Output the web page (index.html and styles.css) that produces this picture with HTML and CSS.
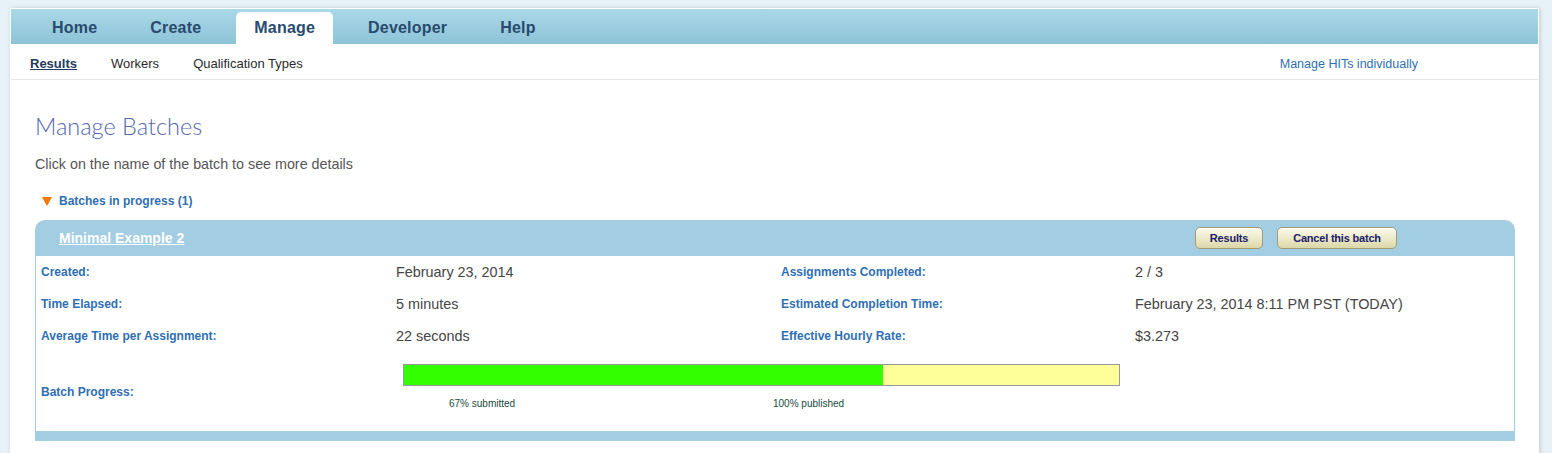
FILE: index.html
```html
<!DOCTYPE html>
<html>
<head>
<meta charset="utf-8">
<title>Manage Batches</title>
<link rel="stylesheet" href="styles.css">
</head>
<body>
<div class="page">
  <div class="tabbar">
    <a class="tab">Home</a>
    <a class="tab">Create</a>
    <a class="tab active">Manage</a>
    <a class="tab">Developer</a>
    <a class="tab">Help</a>
  </div>
  <div class="subnav">
    <div class="subnav-left">
      <a class="sub current">Results</a>
      <a class="sub">Workers</a>
      <a class="sub">Qualification Types</a>
    </div>
    <a class="sub-right">Manage HITs individually</a>
  </div>
  <div class="content">
    <h1 class="title">Manage Batches</h1>
    <p class="intro">Click on the name of the batch to see more details</p>
    <div class="section-toggle">
      <svg class="tri" width="10" height="9" viewBox="0 0 10 9"><polygon points="0,0 10,0 5,9" fill="#f07800"/></svg>
      <span>Batches in progress (1)</span>
    </div>
    <div class="batch">
      <div class="batch-head">
        <a class="batch-name">Minimal Example 2</a>
        <div class="btns">
          <button class="btn btn-results">Results</button>
          <button class="btn btn-cancel">Cancel this batch</button>
        </div>
      </div>
      <div class="batch-body">
        <div class="lbl">Created:</div>
        <div class="val">February 23, 2014</div>
        <div class="lbl">Assignments Completed:</div>
        <div class="val">2 / 3</div>

        <div class="lbl">Time Elapsed:</div>
        <div class="val">5 minutes</div>
        <div class="lbl">Estimated Completion Time:</div>
        <div class="val">February 23, 2014 8:11 PM PST (TODAY)</div>

        <div class="lbl">Average Time per Assignment:</div>
        <div class="val">22 seconds</div>
        <div class="lbl">Effective Hourly Rate:</div>
        <div class="val">$3.273</div>

        <div class="lbl">Batch Progress:</div>
        <div class="prog-cell">
          <div class="bar"><div class="fill" style="width:67%"></div></div>
          <div class="bar-labels">
            <span>67% submitted</span>
            <span>100% published</span>
          </div>
        </div>
      </div>
      <div class="batch-foot"></div>
    </div>
  </div>
</div>
</body>
</html>
```
FILE: styles.css
```css
html, body {
  margin: 0;
  padding: 0;
}
body {
  background: #e7f2f8;
  font-family: "Liberation Sans", Arial, Helvetica, sans-serif;
}
.page {
  margin: 8px 0 0 10px;
  width: 1527px;
  min-height: 480px;
  padding: 1px;
  background: #ffffff;
  box-shadow: 1px 0 4px rgba(0, 0, 0, 0.18);
}
.tabbar {
  height: 35px;
  display: flex;
  align-items: flex-end;
  gap: 17px;
  padding-left: 23px;
  background: linear-gradient(#aad8e8, #8dc3d7);
}
.tab {
  height: 32px;
  line-height: 31px;
  padding: 0 18px;
  font-size: 16px;
  font-weight: bold;
  letter-spacing: 0.2px;
  color: #284a6d;
}
.tab.active {
  background: #ffffff;
  border-radius: 5px 5px 0 0;
}
.subnav {
  height: 36px;
  box-sizing: border-box;
  padding: 4px 120px 0 19px;
  border-bottom: 1px solid #e6e6e6;
  display: flex;
  align-items: center;
  justify-content: space-between;
  font-size: 13px;
}
.subnav-left {
  display: flex;
  gap: 34px;
}
.sub {
  color: #2a2a2a;
}
.sub.current {
  font-weight: bold;
  color: #1e3a5c;
  text-decoration: underline;
}
.sub-right {
  font-size: 12.5px;
  color: #2f6fb3;
}
.content {
  padding: 0 23px 0 24px;
}
.title {
  margin: 31px 0 0;
  font-family: Lato, "Liberation Sans", sans-serif;
  font-weight: 300;
  font-size: 23.5px;
  line-height: 30px;
  color: #5467b2;
}
.intro {
  margin: 14px 0 0;
  font-size: 14.3px;
  line-height: 18px;
  color: #555555;
}
.section-toggle {
  margin: 20px 0 0;
  padding-left: 7px;
  display: flex;
  align-items: center;
  gap: 7px;
  font-size: 12px;
  font-weight: bold;
  line-height: 16px;
  color: #2f6fb3;
}
.tri {
  display: block;
}
.batch {
  margin-top: 11px;
  width: 1480px;
}
.batch-head {
  height: 36px;
  background: #a3cde2;
  border-radius: 10px 10px 0 0;
  display: flex;
  align-items: center;
  justify-content: space-between;
  padding: 0 118px 0 24px;
}
.batch-name {
  font-size: 14px;
  font-weight: bold;
  color: #ffffff;
  text-decoration: underline;
}
.btns {
  display: flex;
  gap: 14px;
}
.btn {
  height: 22px;
  border: 1px solid #a29c70;
  border-radius: 5px;
  background: linear-gradient(#fcfbec, #ebe8c8 55%, #dcd7a8);
  box-shadow: inset 0 1px 0 #ffffff;
  font-family: "Liberation Sans", Arial, sans-serif;
  font-size: 11px;
  font-weight: bold;
  letter-spacing: -0.2px;
  color: #1c1c68;
  padding: 0;
}
.btn-results {
  width: 68px;
}
.btn-cancel {
  width: 120px;
}
.batch-body {
  border-left: 1px solid #a3cde2;
  border-right: 1px solid #a3cde2;
  display: grid;
  grid-template-columns: 360px 380px 359px 1fr;
  grid-template-rows: 32px 32px 32px 79px;
}
.lbl {
  padding-left: 5px;
  display: flex;
  align-items: center;
  font-size: 12px;
  font-weight: bold;
  color: #2f6fb3;
}
.val {
  display: flex;
  align-items: center;
  font-size: 14.4px;
  color: #444444;
}
.prog-cell {
  grid-column: 2 / 5;
  padding: 12px 0 0 7px;
}
.bar {
  width: 715px;
  height: 20px;
  border: 1px solid #999999;
  background: #ffff99;
}
.fill {
  height: 100%;
  background: #33ff00;
}
.bar-labels {
  margin-top: 12px;
  display: grid;
  grid-template-columns: 324px auto;
  padding-left: 46px;
  font-size: 10px;
  line-height: 12px;
  color: #1a4a40;
}
.batch-foot {
  height: 10px;
  background: #a3cde2;
}
```
